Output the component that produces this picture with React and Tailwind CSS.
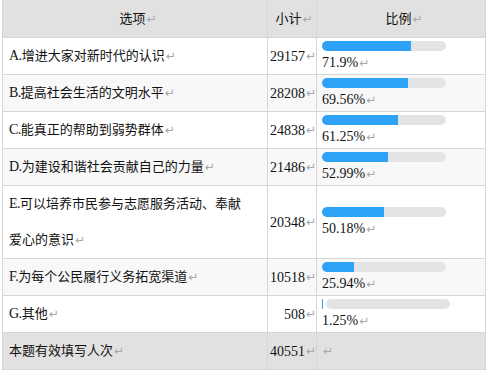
import React from "react";

const rows = [
  { k: "A.", t: "增进大家对新时代的认识", n: "29157", p: 71.9, ps: "71.9%" },
  { k: "B.", t: "提高社会生活的文明水平", n: "28208", p: 69.56, ps: "69.56%" },
  { k: "C.", t: "能真正的帮助到弱势群体", n: "24838", p: 61.25, ps: "61.25%" },
  { k: "D.", t: "为建设和谐社会贡献自己的力量", n: "21486", p: 52.99, ps: "52.99%" },
  { k: "E.", t: "可以培养市民参与志愿服务活动、奉献", t2: "爱心的意识", n: "20348", p: 50.18, ps: "50.18%", tall: true },
  { k: "F.", t: "为每个公民履行义务拓宽渠道", n: "10518", p: 25.94, ps: "25.94%" },
  { k: "G.", t: "其他", n: "508", p: 1.25, ps: "1.25%", tiny: true },
];

const Mark = () => (
  <span className="text-[12px] text-[#a8a8a8] font-['DejaVu_Sans'] ml-[1px] align-baseline">↵</span>
);

const font = { fontFamily: '"Liberation Serif", "Noto Sans CJK SC", serif' };

export default function App() {
  return (
    <div className="w-[486px] h-[371px] bg-white pl-[2px]" style={font}>
      <div className="grid grid-cols-[265px_49px_169px] border-l border-[#d6d6d6] text-[#111]">
        {/* header */}
        <div className="h-[38px] bg-[#e1e1e1] border-r border-b border-[#d6d6d6] flex items-center justify-center text-[13px] pl-[6px]">
          选项<Mark />
        </div>
        <div className="h-[38px] bg-[#e1e1e1] border-r border-b border-[#d6d6d6] flex items-center justify-center text-[13px] pl-[4px]">
          小计<Mark />
        </div>
        <div className="h-[38px] bg-[#e1e1e1] border-r border-b border-[#d6d6d6] flex items-center justify-center text-[13px] pl-[6px]">
          比例<Mark />
        </div>
        {rows.map((r, i) => {
          const bg = i % 2 === 1 ? "bg-[#f8f8f8]" : "bg-white";
          const h = r.tall ? "h-[73px]" : "h-[37px]";
          const blue = (r.p * 124) / 100;
          return (
            <React.Fragment key={r.k}>
              <div className={`${h} ${bg} border-r border-b border-[#d6d6d6] pl-[6px] pr-[2px] text-[13px] leading-[36px] whitespace-nowrap`}>
                <span className="text-[14px] tracking-[-0.5px]">{r.k}</span>
                {r.t}
                {r.t2 ? (
                  <>
                    <br />
                    {r.t2}
                  </>
                ) : null}
                <Mark />
              </div>
              <div className={`${h} ${bg} border-r border-b border-[#d6d6d6] flex items-center justify-end text-[14px]`}>
                {r.n}
                <Mark />
              </div>
              <div className={`${h} ${bg} border-r border-b border-[#d6d6d6] flex flex-col justify-center pl-[5px]`}>
                {r.tiny ? (
                  <div className="flex h-[10px] w-[128px] mt-[1px]">
                    <div className="h-[10px] w-[1px] bg-[#2ea2f7] rounded-l-full" />
                    <div className="h-[10px] ml-[3px] flex-1 bg-[#e3e4e6] rounded-full" />
                  </div>
                ) : (
                  <div className="flex h-[10px] w-[124px] mt-[1px]">
                    <div className="h-[10px] bg-[#2ea2f7] rounded-l-full" style={{ width: blue }} />
                    <div className="h-[10px] flex-1 bg-[#e3e4e6] rounded-r-full" />
                  </div>
                )}
                <div className="text-[14px] leading-[18px] mt-[3px]">
                  {r.ps}
                  <Mark />
                </div>
              </div>
            </React.Fragment>
          );
        })}
        {/* footer */}
        <div className="h-[37px] bg-[#e1e1e1] border-r border-b border-[#d6d6d6] pl-[6px] text-[13px] leading-[36px]">
          本题有效填写人次<Mark />
        </div>
        <div className="h-[37px] bg-[#e1e1e1] border-r border-b border-[#d6d6d6] flex items-center justify-end text-[14px]">
          40551<Mark />
        </div>
        <div className="h-[37px] bg-[#e1e1e1] border-r border-b border-[#d6d6d6] flex items-center pl-[5px] text-[14px]">
          <Mark />
        </div>
      </div>
    </div>
  );
}
